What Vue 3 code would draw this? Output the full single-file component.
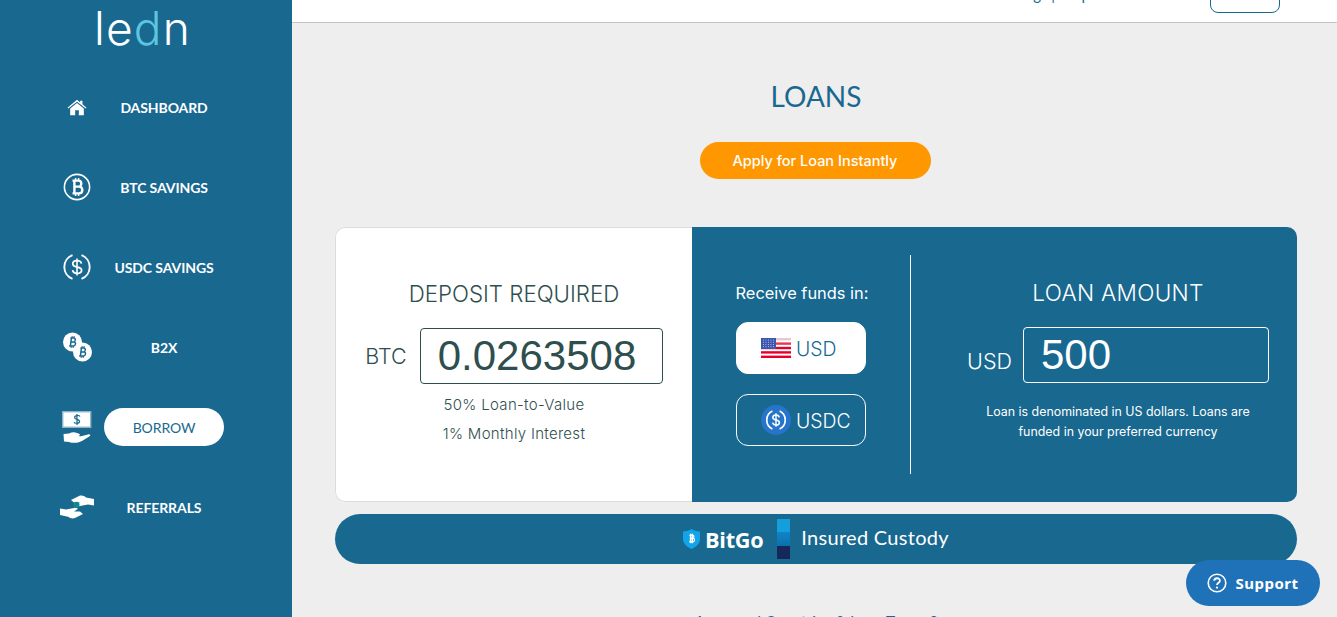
<template>
  <div class="page">
    <aside class="sidebar">
      <div class="logo">
        <span>le</span><span class="logo-d">d</span><span>n</span>
      </div>
      <nav class="nav">
        <a v-for="item in navItems" :key="item.label" class="nav-item">
          <span class="nav-icon">
            <svg v-if="item.icon === 'home'" width="20" height="17" viewBox="0 0 22 18">
              <path d="M11 0.5 L14.5 3.4 V1.6 H17 V5.5 L21.5 9.2 L20.6 10.2 L11 2.6 L1.4 10.2 L0.5 9.2 Z" fill="#fff" />
              <path d="M3.5 10 L11 4 L18.5 10 V17.5 H13 V12 H9 V17.5 H3.5 Z" fill="#fff" />
            </svg>
            <svg v-else-if="item.icon === 'btc'" width="28" height="28" viewBox="0 0 28 28">
              <circle cx="14" cy="14" r="12.6" fill="none" stroke="#fff" stroke-width="1.6" />
              <g fill="none" stroke="#fff" stroke-width="2.4">
                <path d="M9.5 7.6 H15.5 C19.2 7.6 19.2 13.6 15.5 13.6 H11 M11 13.6 H16 C20.4 13.6 20.4 20.4 16 20.4 H9.5 M11.4 7.6 V20.4" />
                <path d="M12.6 5 V7.6 M15.6 5 V7.6 M12.6 20.4 V23 M15.6 20.4 V23" stroke-width="1.5" />
              </g>
            </svg>
            <svg v-else-if="item.icon === 'usdc'" width="28" height="28" viewBox="0 0 28 28">
              <g fill="none" stroke="#fff" stroke-width="1.9">
                <path d="M9.5 2.2 A12.6 12.6 0 0 0 9.5 25.8" />
                <path d="M18.5 2.2 A12.6 12.6 0 0 1 18.5 25.8" />
                <path d="M18.4 10.6 C18 8.2 16 7.6 14 7.6 C11.6 7.6 9.8 8.8 9.8 10.8 C9.8 15.6 18.6 12.6 18.6 17.2 C18.6 19.4 16.6 20.4 14 20.4 C11.6 20.4 10 19.4 9.6 17.2" stroke-width="1.8" />
                <path d="M14 5.4 V22.6" stroke-width="1.6" />
              </g>
            </svg>
            <svg v-else-if="item.icon === 'b2x'" width="30" height="30" viewBox="0 0 30 30">
              <circle cx="10.5" cy="10" r="9.5" fill="#fff" />
              <circle cx="20.5" cy="20" r="9.5" fill="#fff" />
              <g fill="none" stroke="#186890" stroke-width="1.5">
                <path d="M8.4 6 H11.8 C14 6 13.6 10 11.4 10 H8.6 M8.6 10 H12 C14.4 10 13.8 14 11.4 14 H7.2 M9.4 6 L8.4 14" />
                <path d="M10.2 4 L9.9 6 M12.2 4 L11.9 6 M9.4 14 L9.1 16 M11.4 14 L11.1 16" stroke-width="1" />
                <path d="M18.4 16 H21.8 C24 16 23.6 20 21.4 20 H18.6 M18.6 20 H22 C24.4 20 23.8 24 21.4 24 H17.2 M19.4 16 L18.4 24" />
                <path d="M20.2 14 L19.9 16 M22.2 14 L21.9 16 M19.4 24 L19.1 26 M21.4 24 L21.1 26" stroke-width="1" />
              </g>
            </svg>
            <svg v-else-if="item.icon === 'borrow'" width="30" height="33" viewBox="0 0 30 33">
              <rect x="0.7" y="0.7" width="28" height="15.6" fill="#fff" stroke="#8fb3c6" stroke-width="1.4" />
              <path d="M18 5.4 C17.4 4.2 12.6 4 12.6 6.4 C12.6 9 17.6 7.8 17.6 10.4 C17.6 12.8 12.6 12.6 12 11.2 M15 3 V14" fill="none" stroke="#186890" stroke-width="1.2" />
              <path d="M1.5 23 L7 22.4 C10 21 12.5 21 15 22 L17 22.8 C18.6 23.4 18 25 16 25 L19 25.2 L26 23.4 C28 23 29 24 28 25 L20 30 C16 32 11 32.5 7 31 L2 30.5 Z" fill="#fff" />
            </svg>
            <svg v-else width="36" height="24" viewBox="0 0 36 24">
              <path d="M12 5 L20 1 C23 0 25 1 27 2.4 L35 4 V10.5 L29 9.6 L21 11 C18 11.6 16.5 10.6 18 9.4 L21 7.6 L15 7.4 Z" fill="#fff" />
              <path d="M24 19 L16 23 C13 24 11 23 9 21.8 L1 20 V13.5 L7 14.4 L15 13 C18 12.4 19.5 13.4 18 14.6 L15 16.4 L21 16.6 Z" fill="#fff" />
              <circle cx="17.5" cy="9.8" r="3" fill="#0f8a8a" />
            </svg>
          </span>
          <span class="nav-label" :class="{ active: item.active }">{{ item.label }}</span>
        </a>
      </nav>
    </aside>

    <main class="main">
      <header class="topbar">
        <span class="topbar-text">Settings | Help</span>
        <button class="topbar-btn">MENU</button>
      </header>

      <div class="content">
        <h1 class="title">LOANS</h1>
        <button class="apply-btn">Apply for Loan Instantly</button>

        <section class="card">
          <div class="deposit">
            <h2 class="heading">DEPOSIT REQUIRED</h2>
            <div class="amount-row">
              <span class="currency">BTC</span>
              <div class="amount-box deposit-box">{{ depositBtc }}</div>
            </div>
            <p class="note">50% Loan-to-Value</p>
            <p class="note">1% Monthly Interest</p>
          </div>

          <div class="funding">
            <div class="receive">
              <p class="receive-label">Receive funds in:</p>
              <button class="fund-btn selected">
                <svg width="30" height="20" viewBox="0 0 30 20">
                  <rect width="30" height="20" fill="#fff" />
                  <rect y="0" width="30" height="2.4" fill="#e6c9cf" />
                  <rect y="4.4" width="30" height="2.4" fill="#e8374f" />
                  <rect y="8.8" width="30" height="2.4" fill="#e4002b" />
                  <rect y="13.2" width="30" height="2.4" fill="#e4002b" />
                  <rect y="17.6" width="30" height="2.4" fill="#e4002b" />
                  <rect width="15" height="11" fill="#3c56ad" />
                  <g fill="#c6d2ef">
                    <rect v-for="star in flagStars" :key="star.id" :x="star.x" :y="star.y" width="0.9" height="0.9" />
                  </g>
                </svg>
                <span>USD</span>
              </button>
              <button class="fund-btn">
                <svg width="30" height="30" viewBox="0 0 30 30">
                  <circle cx="15" cy="15" r="15" fill="#2775ca" />
                  <g fill="none" stroke="#fff" stroke-width="1.7">
                    <path d="M11.4 6 A10 10 0 0 0 11.4 24" />
                    <path d="M18.6 6 A10 10 0 0 1 18.6 24" />
                    <path d="M18.2 12.4 C18 10.8 16.6 10 15 10 C13.2 10 11.8 11 11.8 12.6 C11.8 16.2 18.4 14 18.4 17.4 C18.4 19.2 16.8 20 15 20 C13.2 20 12 19.2 11.7 17.6" stroke-width="1.5" />
                    <path d="M15 8.2 V21.8" stroke-width="1.4" />
                  </g>
                </svg>
                <span>USDC</span>
              </button>
            </div>

            <div class="divider"></div>

            <div class="loan">
              <h2 class="heading">LOAN AMOUNT</h2>
              <div class="amount-row">
                <span class="currency usd">USD</span>
                <div class="amount-box loan-box">{{ loanUsd }}</div>
              </div>
              <p class="loan-note">
                Loan is denominated in US dollars. Loans are<br />funded in your preferred currency
              </p>
            </div>
          </div>
        </section>

        <div class="custody">
          <svg width="17" height="20" viewBox="0 0 17 20">
            <path d="M8.5 0 C11 1.6 13.6 2.4 17 2.4 V10 C17 14.6 13 18 8.5 20 C4 18 0 14.6 0 10 V2.4 C3.4 2.4 6 1.6 8.5 0 Z" fill="#12a3e8" />
            <path d="M6.4 6.2 H9.6 C11.4 6.2 11.4 9.4 9.6 9.4 H7.2 M7.2 9.4 H10 C12 9.4 12 12.8 10 12.8 H6.2 M7.4 6.2 V12.8 M7.8 4.8 V14.2 M9.4 4.8 V14.2" fill="none" stroke="#fff" stroke-width="1.2" />
          </svg>
          <span class="bitgo">BitGo</span>
          <span class="stripes">
            <i class="stripe-a"></i>
            <i class="stripe-b"></i>
            <i class="stripe-c"></i>
          </span>
          <span class="insured">Insured Custody</span>
        </div>

        <p class="footer-link">Approved Countries &amp; Loan Terms ?</p>
      </div>

      <button class="support">
        <svg width="20" height="20" viewBox="0 0 20 20">
          <circle cx="10" cy="10" r="8.8" fill="none" stroke="#fff" stroke-width="1.6" />
          <path d="M7.2 7.8 C7.2 4.4 12.9 4.4 12.9 7.7 C12.9 9.8 10 9.8 10 12" fill="none" stroke="#fff" stroke-width="1.8" />
          <circle cx="10" cy="14.6" r="1.15" fill="#fff" />
        </svg>
        <span>Support</span>
      </button>
    </main>
  </div>
</template>

<script setup>
import { ref } from 'vue'

const navItems = [
  { label: 'DASHBOARD', icon: 'home' },
  { label: 'BTC SAVINGS', icon: 'btc' },
  { label: 'USDC SAVINGS', icon: 'usdc' },
  { label: 'B2X', icon: 'b2x' },
  { label: 'BORROW', icon: 'borrow', active: true },
  { label: 'REFERRALS', icon: 'referrals' },
]

const depositBtc = ref('0.0263508')
const loanUsd = ref('500')

// little dots in the canton of the flag
const flagStars = []
for (let row = 0; row < 4; row++) {
  for (let col = 0; col < 5; col++) {
    flagStars.push({ id: row + '-' + col, x: 2 + col * 2.5, y: 1.6 + row * 2.2 })
  }
}
</script>

<style>
html,
body {
  margin: 0;
  overflow: hidden;
}
</style>

<style scoped>
.page {
  display: flex;
  height: 617px;
  overflow: hidden;
  background: #eeeeee;
  font-family: Inter, "Open Sans", sans-serif;
  color: #2f4f4f;
}

.sidebar {
  flex: 0 0 292px;
  background: #186890;
  font-family: Lato, sans-serif;
}

.logo {
  box-sizing: border-box;
  height: 67px;
  padding-top: 5px;
  padding-right: 7px;
  display: flex;
  justify-content: center;
  align-items: flex-start;
  font-family: Inter, sans-serif;
  font-weight: 300;
  font-size: 46px;
  line-height: 46px;
  letter-spacing: 1.2px;
  color: #fff;
}

.logo-d {
  color: #5cc6e0;
}

.nav-item {
  display: grid;
  grid-template-columns: 54px 120px;
  align-items: center;
  height: 80px;
  padding-left: 50px;
}

.nav-icon {
  display: flex;
  justify-content: center;
  align-items: center;
}

.nav-label {
  display: block;
  text-align: center;
  padding-top: 2px;
  font-size: 14px;
  font-weight: 700;
  letter-spacing: -0.1px;
  line-height: 36px;
  color: #fff;
}

.nav-label.active {
  background: #fff;
  color: #186890;
  font-weight: 400;
  border-radius: 19px;
}

.main {
  flex: 1;
  position: relative;
  min-width: 0;
}

.topbar {
  height: 22px;
  overflow: hidden;
  background: #fff;
  border-bottom: 1px solid #c4c4c4;
  display: flex;
  justify-content: flex-end;
  align-items: flex-end;
  padding-right: 57px;
}

.topbar-text {
  margin-bottom: 21px;
  margin-right: 120px;
  font-family: Lato, sans-serif;
  font-size: 15px;
  line-height: 14px;
  white-space: nowrap;
  color: #186890;
}

.topbar-btn {
  width: 70px;
  height: 40px;
  margin-bottom: 9px;
  background: #fff;
  border: 1.5px solid #186890;
  border-radius: 8px;
  color: #186890;
}

.content {
  padding: 0 40px 0 43px;
  display: flex;
  flex-direction: column;
  align-items: center;
}

.title {
  margin: 53px 0 26px;
  font-family: Lato, sans-serif;
  font-size: 28px;
  font-weight: 400;
  line-height: 40px;
  color: #186890;
}

.apply-btn {
  width: 231px;
  height: 37px;
  margin-right: 2px;
  border: none;
  border-radius: 19px;
  background: #ff9800;
  color: #fff;
  font-family: Inter, sans-serif;
  font-size: 14.5px;
  font-weight: 500;
}

.card {
  display: flex;
  width: 100%;
  height: 275px;
  margin-top: 48px;
  border-radius: 10px;
  overflow: hidden;
}

.deposit {
  flex: 0 0 357px;
  box-sizing: border-box;
  padding-top: 50px;
  background: #fff;
  border: 1px solid #dcdcdc;
  border-right: none;
  border-radius: 10px 0 0 10px;
  text-align: center;
}

.heading {
  margin: 0 0 18px;
  font-size: 22.3px;
  font-weight: 300;
  line-height: 32px;
}

.amount-row {
  display: flex;
  justify-content: center;
  align-items: center;
  gap: 13px;
}

.currency {
  font-size: 21.5px;
  font-weight: 300;
}

.amount-box {
  box-sizing: border-box;
  height: 56px;
  border: 1px solid #2f4f4f;
  border-radius: 4px;
  font-family: "Liberation Sans", sans-serif;
  font-size: 42px;
  line-height: 54px;
  text-align: left;
}

.deposit-box {
  width: 243px;
  padding-left: 17px;
}

.note {
  margin: 0;
  font-size: 15px;
  font-weight: 350;
  letter-spacing: 0.3px;
  line-height: 29px;
}

.note:first-of-type {
  margin-top: 6px;
}

.funding {
  flex: 1;
  display: flex;
  background: #186890;
  color: #fff;
}

.receive {
  flex: 0 0 218px;
  box-sizing: border-box;
  padding: 53px 0 0 44px;
}

.receive-label {
  width: 140px;
  margin: 0 0 18px -4px;
  font-size: 16.4px;
  font-weight: 400;
  line-height: 26px;
  text-align: center;
  white-space: nowrap;
}

.fund-btn {
  display: flex;
  align-items: center;
  gap: 5px;
  box-sizing: border-box;
  width: 130px;
  height: 52px;
  margin-bottom: 20px;
  padding: 0 0 0 24px;
  background: transparent;
  border: 1px solid #fff;
  border-radius: 12px;
  color: #fff;
  font-family: Inter, sans-serif;
  font-size: 19.4px;
  font-weight: 300;
}

.fund-btn span {
  margin-top: 2px;
}

.fund-btn.selected {
  background: #fff;
  color: #186890;
}

.receive-label + .fund-btn {
  margin-top: -2px;
}

.divider {
  flex: 0 0 1px;
  height: 219px;
  margin-top: 28px;
  background: #fff;
}

.loan {
  flex: 1;
  padding: 50px 0 0 28px;
  text-align: center;
}

.loan .heading {
  margin-bottom: 18px;
  font-size: 22.6px;
  letter-spacing: 0.3px;
}

.loan .amount-row {
  gap: 11px;
}

.currency.usd {
  padding-top: 11px;
}

.loan-box {
  width: 246px;
  padding-left: 17px;
  border-color: #fff;
}

.loan-note {
  margin: 19px 0 0;
  font-size: 12.4px;
  line-height: 20px;
}

.custody {
  display: flex;
  justify-content: center;
  align-items: center;
  width: 100%;
  height: 50px;
  margin-top: 12px;
  background: #186890;
  border-radius: 25px;
  color: #fff;
}

.bitgo {
  margin: 0 14px 0 5px;
  font-family: "Open Sans", sans-serif;
  font-size: 21.7px;
  font-weight: 700;
  letter-spacing: -0.3px;
}

.stripes {
  display: flex;
  flex-direction: column;
  width: 13px;
  height: 40px;
  margin-right: 11px;
}

.stripes i {
  flex: 1;
}

.stripe-a {
  background: #149fdc;
}

.stripe-b {
  background: linear-gradient(#0f86c9, #0c6fae);
}

.stripe-c {
  background: #16275a;
}

.insured {
  margin-top: -4px;
  font-family: Lato, sans-serif;
  font-size: 20px;
  letter-spacing: 0.3px;
}

.footer-link {
  margin: 48px 0 0;
  font-family: Lato, sans-serif;
  font-size: 15.5px;
  line-height: 18px;
  color: #186890;
  white-space: nowrap;
}

.support {
  position: absolute;
  left: 894px;
  top: 560px;
  display: flex;
  align-items: center;
  justify-content: center;
  gap: 8px;
  width: 134px;
  height: 46px;
  border: none;
  border-radius: 23px;
  background: #1f72b8;
  color: #fff;
  font-family: "Noto Sans", sans-serif;
  font-size: 15px;
  font-weight: 700;
  letter-spacing: 0.5px;
}
</style>
